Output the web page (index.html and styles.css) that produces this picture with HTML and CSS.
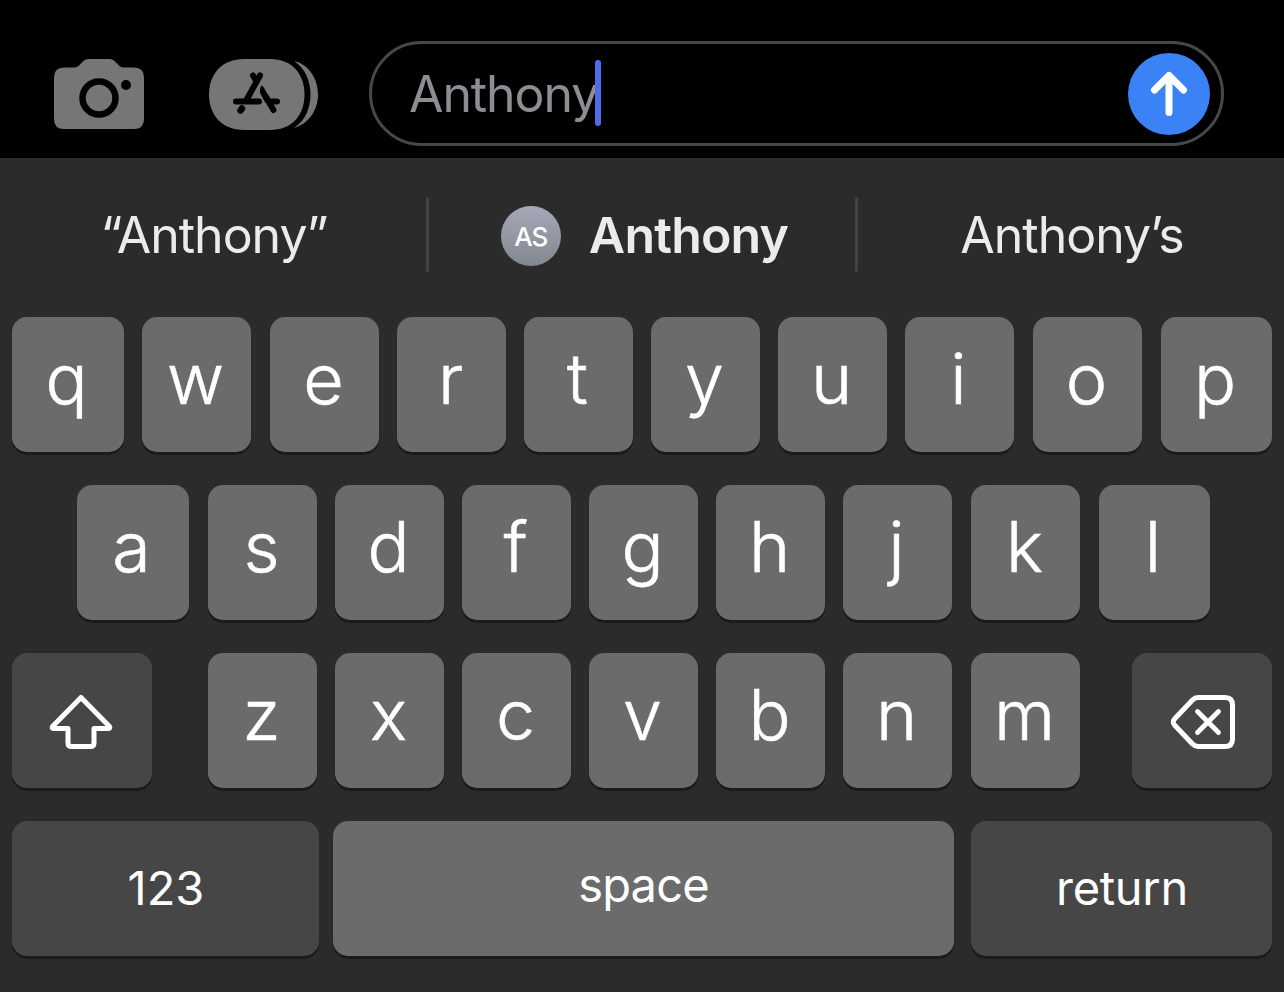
FILE: index.html
```html
<!DOCTYPE html>
<html lang="en">
<head>
    <meta charset="UTF-8">
    <meta name="viewport" content="width=device-width, initial-scale=1.0">
    <title>Messages Keyboard</title>
    <link rel="stylesheet" href="styles.css">
</head>
<body>
    <div class="compose">
        <svg class="camera" width="90" height="71" viewBox="0 0 90 71">
            <path fill="#767676" d="M10 8.500H19C24 8.500 25 6.500 28 3.500C31 .5 32 0 36 0H54C58 0 59 .5 62 3.500C65 6.500 66 8.500 71 8.500H80Q90 8.500 90 18.500V60Q90 70 80 70H10Q0 70 0 60V18.500Q0 8.500 10 8.500Z"/>
            <circle cx="45" cy="39" r="16.500" fill="none" stroke="#000" stroke-width="6.500"/>
            <circle cx="72" cy="26" r="5" fill="#000"/>
        </svg>
        <svg class="apps" width="110" height="71" viewBox="0 0 110 71">
            <path fill="#767676" d="M35 0H61C83 0 95.500 15 95.500 35.500S83 71 61 71H35C13 71 0 56 0 35.500S13 0 35 0Z"/>
            <path fill="#767676" d="M85 2C99 5 109 19 109 35.500S99 65 85 69C96 62 101.500 49 101.500 35.500S96 9 85 2Z"/>
            <g fill="none" stroke="#000" stroke-width="6" stroke-linecap="round">
                <path d="M51 16.500 37.500 41"/>
                <path d="M44 16.500 47 21.500"/>
                <path d="M27 42.500H50"/>
                <path d="M57 38 64.500 51"/>
                <path d="M61 42.500H68"/>
                <path d="M33 49.500 31.500 51.500" stroke-width="6.500"/>
            </g>
            <path fill="#000" d="M52.500 26.500Q54 26.500 55 29L62 41 56.500 44 51.500 35Q50 30 52.500 26.500Z"/>
        </svg>
        <div class="field">
            <span class="typed">Anthony</span>
            <span class="caret"></span>
            <div class="send">
                <svg width="82" height="82" viewBox="0 0 82 82" fill="none" stroke="#fff" stroke-width="7" stroke-linecap="round" stroke-linejoin="round">
                    <path d="M41 59.500V22.500M26.500 37 41 22.500 55.500 37"/>
                </svg>
            </div>
        </div>
    </div>

    <div class="keyboard">
        <div class="suggestions">
            <div class="suggestion">“Anthony”</div>
            <div class="divider"></div>
            <div class="suggestion middle"><span class="avatar">AS</span><b>Anthony</b></div>
            <div class="divider"></div>
            <div class="suggestion">Anthony’s</div>
        </div>

        <div class="row row-top">
            <div class="key">q</div>
            <div class="key">w</div>
            <div class="key">e</div>
            <div class="key">r</div>
            <div class="key">t</div>
            <div class="key">y</div>
            <div class="key">u</div>
            <div class="key">i</div>
            <div class="key">o</div>
            <div class="key">p</div>
        </div>
        <div class="row row-home">
            <div class="key">a</div>
            <div class="key">s</div>
            <div class="key">d</div>
            <div class="key">f</div>
            <div class="key">g</div>
            <div class="key">h</div>
            <div class="key">j</div>
            <div class="key">k</div>
            <div class="key">l</div>
        </div>
        <div class="row row-bottom">
            <div class="key dark shift">
                <svg width="64" height="56" viewBox="0 0 64 56" fill="none" stroke="#fff" stroke-width="5" stroke-linejoin="round">
                    <path d="M32 3.500 60.500 32.500Q61.500 34.500 59.500 34.500H45V49Q45 52.500 41.500 52.500H22.500Q19 52.500 19 49V34.500H4.500Q2.500 34.500 3.500 32.500Z"/>
                </svg>
            </div>
            <div class="key">z</div>
            <div class="key">x</div>
            <div class="key">c</div>
            <div class="key">v</div>
            <div class="key">b</div>
            <div class="key">n</div>
            <div class="key">m</div>
            <div class="key dark delete">
                <svg width="66" height="56" viewBox="0 0 66 56" fill="none" stroke="#fff" stroke-width="5" stroke-linecap="round" stroke-linejoin="round">
                    <path d="M28 3.500H55Q62.500 3.500 62.500 11V45Q62.500 52.500 55 52.500H28Q25 52.500 22.500 50L4.500 31Q2 28 4.500 25L22.500 6Q25 3.500 28 3.500Z"/>
                    <path d="M27.500 17.500 48.500 38.500M48.500 17.500 27.500 38.500" stroke-width="4.800"/>
                </svg>
            </div>
        </div>
        <div class="row row-space">
            <div class="key dark word numbers">123</div>
            <div class="key word space">space</div>
            <div class="key dark word return">return</div>
        </div>
    </div>
</body>
</html>
```
FILE: styles.css
```css
body {
    margin: 0;
    background-color: #000;
    font-family: Inter, "Liberation Sans", sans-serif;
    color: #fff;
    width: 1284px;
    height: 992px;
    overflow: hidden;
}
svg {
    display: block;
    flex: none;
}
.compose {
    display: flex;
    align-items: flex-start;
    box-sizing: border-box;
    height: 158px;
    padding: 41px 60px 0 54px;
}
.camera {
    margin-top: 18px;
}
.apps {
    margin: 18px 50px 0 65px;
}
.field {
    display: flex;
    align-items: center;
    box-sizing: border-box;
    width: 855px;
    height: 105px;
    border: 3px solid #48474c;
    border-radius: 53px;
    padding: 0 11px 0 37px;
}
.typed {
    font-size: 50px;
    letter-spacing: -1.1px;
    color: #8e8d93;
    width: 186px;
    padding-top: 1px;
}
.caret {
    width: 6px;
    height: 66px;
    margin-bottom: 1px;
    border-radius: 3px;
    background-color: #4f6bea;
}
.send {
    margin-left: auto;
    width: 82px;
    height: 82px;
    border-radius: 50%;
    background-color: #3b82f7;
}
.keyboard {
    box-sizing: border-box;
    height: 834px;
    padding: 39px 12px 0;
    background-color: #2b2b2b;
}
.suggestions {
    display: flex;
    align-items: center;
    height: 75px;
    margin: 0 -12px 45px;
    font-size: 50px;
    letter-spacing: -1px;
    color: #ebebeb;
}
.suggestion {
    display: flex;
    box-sizing: border-box;
    width: 426px;
    align-items: center;
    justify-content: center;
    padding: 1px 0 0 2px;
}
.middle {
    padding: 2px 0 0 5px;
}
.suggestion b {
    font-weight: 600;
    letter-spacing: -0.8px;
    padding-bottom: 1px;
}
.avatar {
    width: 60px;
    height: 60px;
    margin-right: 28px;
    border-radius: 50%;
    background: linear-gradient(#a5a9b7, #838791);
    color: #fff;
    font-size: 26px;
    font-weight: 500;
    line-height: 62px;
    text-align: center;
}
.divider {
    width: 3px;
    height: 75px;
    border-radius: 2px;
    background-color: #434343;
}
.row {
    display: flex;
    gap: 18px;
    margin-bottom: 33px;
}
.key {
    display: flex;
    align-items: center;
    justify-content: center;
    box-sizing: border-box;
    flex: none;
    width: 109px;
    height: 135px;
    padding: 0 2px 13px 0;
    border-radius: 15px;
    background-color: #6b6b6b;
    box-shadow: 0 3px 0 #1b1b1b;
    font-size: 70px;
    font-weight: 300;
    -webkit-text-stroke: 0.6px #fff;
}
.dark {
    background-color: #464646;
}
.row-home {
    padding-left: 65px;
}
.row-top .key:first-child,
.row-home .key:first-child {
    width: 112px;
    padding-right: 3px;
}
.row-top .key:last-child,
.row-home .key:last-child {
    width: 111px;
    padding-right: 3px;
}
/* odd pixels left over between the columns */
.row-top .key:nth-child(3),
.row-top .key:nth-child(n+9),
.row-home .key:nth-child(2),
.row-home .key:nth-child(n+8),
.row-bottom .key:nth-child(8) {
    margin-left: 1px;
}
.row-bottom .shift,
.row-bottom .delete {
    width: 140px;
    padding: 3px 0 0;
}
.row-bottom .shift {
    margin-right: 38px;
    padding-right: 3px;
}
.row-bottom .delete {
    margin-left: 34px;
    padding-left: 1px;
}
.row-space {
    gap: 0;
    justify-content: space-between;
}
.row-space .word {
    padding: 0;
    font-size: 47px;
    font-weight: 400;
    -webkit-text-stroke: 0;
}
.row-space .numbers {
    width: 307px;
    padding: 0 0 2px 1px;
}
.row-space .space {
    width: 621px;
    margin-right: 3px;
    padding-bottom: 8px;
    letter-spacing: -0.8px;
}
.row-space .return {
    width: 301px;
    padding: 0 0 2px 1px;
    letter-spacing: -0.3px;
}
```
